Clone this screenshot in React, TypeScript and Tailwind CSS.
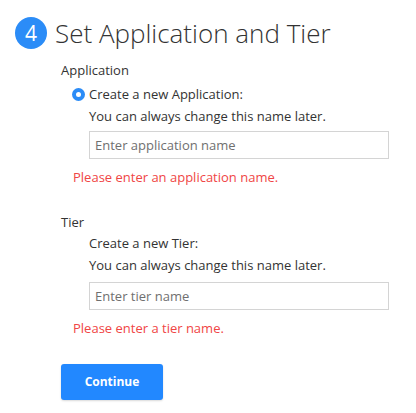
export default function App() {
    return (
        <div className="min-h-screen bg-white pl-[15px] pt-[17px] text-[13px] text-[#333] font-['Open_Sans',sans-serif]">
            {/* Header */}
            <div className="flex items-center gap-[8px]">
                <div className="flex h-[32px] w-[32px] items-center justify-center rounded-full bg-[#2b8cf7] text-[21px] leading-none text-white">
                    4
                </div>
                <h1 className="text-[26px] font-light leading-[32px] text-[#333]">Set Application and Tier</h1>
            </div>

            <div className="ml-[46px] mt-[11px]">
                {/* Application */}
                <div className="leading-[20px]">Application</div>
                <div className="mt-[3px] flex items-center leading-[22px]">
                    <span className="ml-[11px] mr-[4px] flex h-[13px] w-[13px] items-center justify-center rounded-full bg-[#2b8cf7]">
                        <span className="h-[5px] w-[5px] rounded-full bg-white"></span>
                    </span>
                    <span>Create a new Application:</span>
                </div>
                <div className="ml-[28px] leading-[22px]">You can always change this name later.</div>
                <input
                    className="ml-[28px] mt-[4px] block h-[28px] w-[300px] border border-[#d4d4d4] px-[5px] text-[13px] text-[#333] placeholder:text-[#6f6f6f] outline-none"
                    placeholder="Enter application name"
                />
                <div className="ml-[12px] mt-[8px] leading-[20px] text-[#f04545]">Please enter an application name.</div>

                {/* Tier */}
                <div className="mt-[25px] leading-[20px]">Tier</div>
                <div className="ml-[28px] leading-[22px]">Create a new Tier:</div>
                <div className="ml-[28px] leading-[22px]">You can always change this name later.</div>
                <input
                    className="ml-[28px] mt-[6px] block h-[28px] w-[300px] border border-[#d4d4d4] px-[5px] text-[13px] text-[#333] placeholder:text-[#6f6f6f] outline-none"
                    placeholder="Enter tier name"
                />
                <div className="ml-[12px] mt-[8px] leading-[20px] text-[#f04545]">Please enter a tier name.</div>

                <button className="mt-[26px] h-[36px] w-[102px] rounded-[3px] bg-[#2288ff] text-[12px] font-bold text-white shadow-[0_1px_2px_rgba(0,0,0,0.15)]">
                    Continue
                </button>
            </div>
        </div>
    );
}
